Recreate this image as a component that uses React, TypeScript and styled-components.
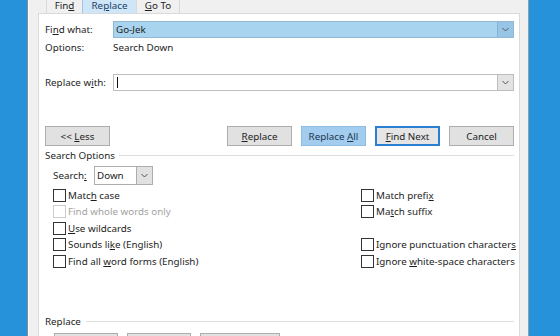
import styled, { createGlobalStyle } from 'styled-components'

const GlobalStyle = createGlobalStyle`
  html, body {
    margin: 0;
    height: 100%;
    overflow: hidden;
    background: #2692da;
  }
  body {
    font-family: "Noto Sans", "Liberation Sans", sans-serif;
    font-size: 9.8px;
    color: #1e1e1e;
    white-space: nowrap;
  }
  u {
    text-decoration-thickness: 1px;
    text-underline-offset: 1px;
  }
`

const Screen = styled.div`
  display: flex;
  height: 336px;
  padding-left: 27px;
`

const Dialog = styled.div`
  width: 502px;
  box-sizing: border-box;
  display: flex;
  flex-direction: column;
  overflow: hidden;
  background: #f0f0f0;
  border-left: 1px solid #8a8a8a;
  border-right: 1px solid #8f9fae;
  box-shadow: inset 1px 0 #fbfbfb;
  padding: 0 8px 0 10px;
`

const TabRow = styled.div`
  display: flex;
  margin-top: -4px;
  padding-left: 9px;
`

const Tab = styled.div<{ $active?: boolean; $w: number }>`
  width: ${p => p.$w}px;
  height: 17px;
  box-sizing: border-box;
  display: flex;
  align-items: flex-end;
  justify-content: center;
  padding-bottom: 1px;
  border: 1px solid ${p => (p.$active ? '#9cc7ea' : '#d9d9d9')};
  border-bottom: none;
  margin-left: -1px;
  background: ${p => (p.$active ? '#cfe5f8' : '#f0f0f0')};
  color: ${p => (p.$active ? '#1b3f66' : '#1e1e1e')};
`

const Panel = styled.div`
  flex: 1;
  background: #fff;
  border: 1px solid #dadada;
  padding: 7px 5px 0 6px;
  display: flex;
  flex-direction: column;
`

const FieldRow = styled.div<{ $mt?: number }>`
  display: flex;
  align-items: center;
  margin-top: ${p => p.$mt ?? 0}px;
  min-height: 16px;
`

const Label = styled.div`
  width: 68px;
  flex-shrink: 0;
`

const Combo = styled.div<{ $selected?: boolean }>`
  flex: 1;
  height: 17px;
  box-sizing: border-box;
  display: flex;
  align-items: stretch;
  border: 1px solid ${p => (p.$selected ? '#93b8d6' : '#bdbdbd')};
  background: ${p => (p.$selected ? '#a8d4ef' : '#fff')};
`

const ComboText = styled.div`
  flex: 1;
  display: flex;
  align-items: center;
  padding-left: 2px;
`

const Caret = styled.span`
  width: 1px;
  height: 11px;
  background: #111;
  margin-left: 1px;
`

const ComboButton = styled.div<{ $selected?: boolean }>`
  width: 15px;
  display: flex;
  align-items: center;
  justify-content: center;
  border-left: 1px solid ${p => (p.$selected ? '#86b1d2' : '#bdbdbd')};
  background: ${p => (p.$selected ? '#96c5e6' : '#e3e3e3')};
`

const ButtonRow = styled.div<{ $mt: number; $pl?: number }>`
  display: flex;
  gap: 9px;
  margin-top: ${p => p.$mt}px;
  padding-left: ${p => p.$pl ?? 0}px;
`

const Spacer = styled.div`
  flex: 1;
`

const Button = styled.div<{ $variant?: 'hot' | 'focus'; $w?: number }>`
  width: ${p => p.$w ?? 65}px;
  height: 20px;
  box-sizing: border-box;
  display: flex;
  align-items: center;
  justify-content: center;
  background: ${p => (p.$variant === 'hot' ? '#a3cdee' : p.$variant === 'focus' ? '#e5e5e5' : '#e1e1e1')};
  border: ${p =>
    p.$variant === 'hot' ? '1px solid #8dbde3' : p.$variant === 'focus' ? '2px solid #2b7fd0' : '1px solid #adadad'};
  color: ${p => (p.$variant === 'hot' ? '#1d3550' : '#1e1e1e')};
`

const GroupHeader = styled.div<{ $mt: number; $gap: number }>`
  display: flex;
  align-items: center;
  height: 14px;
  margin-top: ${p => p.$mt}px;

  &::after {
    content: '';
    flex: 1;
    height: 1px;
    background: #dedede;
    margin-left: ${p => p.$gap}px;
  }
`

const SearchRow = styled.div`
  display: flex;
  align-items: center;
  margin-top: 4px;
  padding-left: 8px;
`

const SearchLabel = styled.div`
  width: 41px;
`

const Select = styled.div`
  width: 59px;
  height: 19px;
  box-sizing: border-box;
  display: flex;
  border: 1px solid #adadad;
  background: #fff;
`

const SelectText = styled.div`
  flex: 1;
  display: flex;
  align-items: center;
  padding-left: 2px;
`

const SelectButton = styled.div`
  width: 15px;
  display: flex;
  align-items: center;
  justify-content: center;
  border-left: 1px solid #adadad;
  background: #e1e1e1;
`

const OptionGrid = styled.div`
  display: grid;
  grid-template-columns: 308px 1fr;
  grid-template-rows: repeat(5, 16.5px);
  grid-auto-flow: column;
  margin-top: 2px;
  padding-left: 8px;
`

const Check = styled.div<{ $disabled?: boolean }>`
  display: flex;
  align-items: center;
  gap: 2px;
  color: ${p => (p.$disabled ? '#a2a2a2' : '#1e1e1e')};
`

const Box = styled.span<{ $disabled?: boolean }>`
  width: 13px;
  height: 13px;
  box-sizing: border-box;
  border: 1px solid ${p => (p.$disabled ? '#cccccc' : '#333')};
  background: #fff;
  flex-shrink: 0;
`

const Empty = styled.div``

function Chevron() {
  return (
    <svg width="7" height="5" viewBox="0 0 7 5">
      <polyline points="0.5,1 3.5,4 6.5,1" fill="none" stroke="#555" strokeWidth="1" />
    </svg>
  )
}

function CheckOption({ children, disabled }: { children: React.ReactNode; disabled?: boolean }) {
  return (
    <Check $disabled={disabled}>
      <Box $disabled={disabled} />
      <span>{children}</span>
    </Check>
  )
}

export default function App() {
  return (
    <>
      <GlobalStyle />
      <Screen>
        <Dialog>
          <TabRow>
            <Tab $w={37}>
              <span>
                Fin<u>d</u>
              </span>
            </Tab>
            <Tab $w={55} $active>
              <span>
                Re<u>p</u>lace
              </span>
            </Tab>
            <Tab $w={44}>
              <span>
                <u>G</u>o To
              </span>
            </Tab>
          </TabRow>

          <Panel>
            <FieldRow>
              <Label>
                Fi<u>n</u>d what:
              </Label>
              <Combo $selected>
                <ComboText>Go-Jek</ComboText>
                <ComboButton $selected>
                  <Chevron />
                </ComboButton>
              </Combo>
            </FieldRow>
            <FieldRow $mt={1}>
              <Label>Options:</Label>
              <span>Search Down</span>
            </FieldRow>
            <FieldRow $mt={19}>
              <Label>
                Replace w<u>i</u>th:
              </Label>
              <Combo>
                <ComboText>
                  <Caret />
                </ComboText>
                <ComboButton>
                  <Chevron />
                </ComboButton>
              </Combo>
            </FieldRow>

            <ButtonRow $mt={35}>
              <Button>
                &lt;&lt;&nbsp;<u>L</u>ess
              </Button>
              <Spacer />
              <Button>
                <u>R</u>eplace
              </Button>
              <Button $variant="hot">
                Replace&nbsp;<u>A</u>ll
              </Button>
              <Button $variant="focus">
                <u>F</u>ind Next
              </Button>
              <Button>Cancel</Button>
            </ButtonRow>

            <GroupHeader $mt={2} $gap={4}>
              Search Options
            </GroupHeader>

            <SearchRow>
              <SearchLabel>
                Search<u>:</u>
              </SearchLabel>
              <Select>
                <SelectText>Down</SelectText>
                <SelectButton>
                  <Chevron />
                </SelectButton>
              </Select>
            </SearchRow>

            <OptionGrid>
              <CheckOption>
                Matc<u>h</u> case
              </CheckOption>
              <CheckOption disabled>Find whole words only</CheckOption>
              <CheckOption>
                <u>U</u>se wildcards
              </CheckOption>
              <CheckOption>
                Sounds li<u>k</u>e (English)
              </CheckOption>
              <CheckOption>
                Find all <u>w</u>ord forms (English)
              </CheckOption>
              <CheckOption>
                Match prefi<u>x</u>
              </CheckOption>
              <CheckOption>
                Ma<u>t</u>ch suffix
              </CheckOption>
              <Empty />
              <CheckOption>
                Ignore punctuation character<u>s</u>
              </CheckOption>
              <CheckOption>
                Ignore <u>w</u>hite-space characters
              </CheckOption>
            </OptionGrid>

            <GroupHeader $mt={45} $gap={5}>
              Replace
            </GroupHeader>

            <ButtonRow $mt={4} $pl={9}>
              <Button $w={64}>
                F<u>o</u>rmat ▾
              </Button>
              <Button $w={64}>
                Sp<u>e</u>cial ▾
              </Button>
              <Button $w={80}>No Formatting</Button>
            </ButtonRow>
          </Panel>
        </Dialog>
      </Screen>
    </>
  )
}
